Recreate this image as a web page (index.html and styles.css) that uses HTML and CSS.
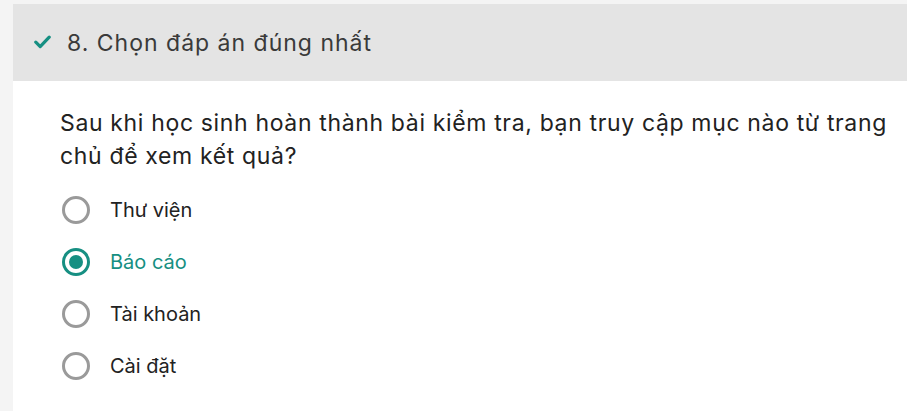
FILE: index.html
```html
<!DOCTYPE html>
<html lang="vi">
<head>
<meta charset="utf-8">
<link rel="stylesheet" href="styles.css">
</head>
<body>
<div class="page">
  <div class="card">
    <div class="header">
      <svg class="check" width="17" height="14" viewBox="0 0 17 14"><path d="M1.8 7.2 L6.2 11.6 L15.2 2.2" fill="none" stroke="#168f82" stroke-width="3.2" stroke-linecap="round" stroke-linejoin="round"/></svg>
      <span class="title">8. Chọn đáp án đúng nhất</span>
    </div>
    <div class="body">
      <p class="question">Sau khi học sinh hoàn thành bài kiểm tra, bạn truy cập mục nào từ trang chủ để xem kết quả?</p>
      <ul class="options">
        <li class="option"><span class="radio"></span><span>Thư viện</span></li>
        <li class="option selected"><span class="radio"></span><span>Báo cáo</span></li>
        <li class="option"><span class="radio"></span><span>Tài khoản</span></li>
        <li class="option"><span class="radio"></span><span>Cài đặt</span></li>
      </ul>
    </div>
  </div>
</div>
</body>
</html>
```
FILE: styles.css
```css
html, body {
  margin: 0;
  padding: 0;
  background: #f4f4f4;
  font-family: "Inter", "Noto Sans", sans-serif;
}
.page {
  padding: 4px 0 0 13px;
  height: 407px;
  overflow: hidden;
}
.card {
  background: #ffffff;
  height: 100%;
}
.header {
  background: #e4e4e4;
  height: 77px;
  display: flex;
  align-items: center;
  padding-left: 21px;
  gap: 16px;
}
.check {
  display: block;
  margin-top: -2px;
}
.title {
  font-size: 23px;
  letter-spacing: 1px;
  color: #3a3a3a;
}
.body {
  padding: 26px 0 0 47px;
}
.question {
  margin: 0;
  font-size: 23px;
  letter-spacing: 0.65px;
  line-height: 33px;
  color: #222222;
  max-width: 845px;
}
.options {
  list-style: none;
  margin: 11px 0 0 0;
  padding: 0;
}
.option {
  display: flex;
  align-items: center;
  height: 52px;
  font-size: 20px;
  color: #222222;
  gap: 20px;
}
.radio {
  box-sizing: border-box;
  width: 28px;
  height: 28px;
  border: 3px solid #9a9a9a;
  border-radius: 50%;
  margin-left: 2px;
  display: flex;
  align-items: center;
  justify-content: center;
}
.selected {
  color: #168f82;
}
.selected .radio {
  border-color: #168f82;
}
.selected .radio::after {
  content: "";
  width: 14px;
  height: 14px;
  border-radius: 50%;
  background: #168f82;
}
```
